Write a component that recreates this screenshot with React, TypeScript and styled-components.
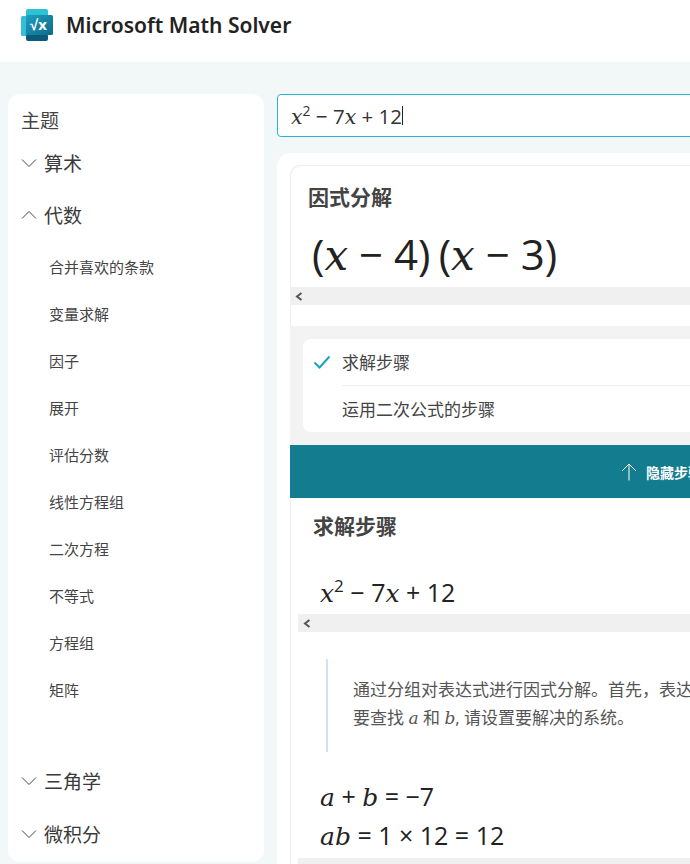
import React from "react";
import styled, { createGlobalStyle } from "styled-components";

const CJK = `"Open Sans", "Noto Sans CJK SC", sans-serif`;

const GlobalStyle = createGlobalStyle`
  html, body {
    margin: 0;
    height: 864px;
    overflow: hidden;
    background: #f2f7f7;
    font-family: ${CJK};
    color: #333;
  }
  * {
    box-sizing: border-box;
  }
`;

const Header = styled.header`
  height: 62px;
  background: #fff;
  display: flex;
  align-items: center;
  padding: 0 0 12px 21px;
  gap: 13px;
`;

const Brand = styled.div`
  font-size: 21px;
  font-weight: 600;
  color: #222;
  white-space: nowrap;
  font-family: "Noto Sans", sans-serif;
`;

const Page = styled.div`
  display: flex;
  align-items: flex-start;
  gap: 13px;
  padding: 32px 0 0 8px;
  width: 1200px;
`;

const Sidebar = styled.aside`
  width: 256px;
  flex: none;
  height: 768px;
  background: #fff;
  border-radius: 12px;
  padding-top: 15px;
`;

const SideTitle = styled.div`
  height: 24px;
  line-height: 24px;
  margin: 0 0 3.5px 13px;
  font-size: 19px;
  color: #444;
`;

const TopicRow = styled.div`
  height: 52.6px;
  display: flex;
  align-items: center;
  gap: 7px;
  padding-left: 13px;
  font-size: 19px;
  color: #3a3a3a;
`;

const TopicList = styled.ul`
  list-style: none;
  margin: 2px 0 41px;
  padding: 0;
`;

const TopicItem = styled.li`
  height: 47px;
  line-height: 47px;
  padding-left: 41px;
  font-size: 15px;
  color: #444;
`;

const Main = styled.main`
  width: 900px;
  flex: none;
  display: flex;
  flex-direction: column;
  gap: 16px;
`;

const SearchBox = styled.div`
  height: 43px;
  background: #fff;
  border: 1px solid #2bb4d0;
  border-radius: 4px;
  display: flex;
  align-items: center;
  padding-left: 13px;
  font-size: 20.5px;
  color: #333;
`;

const Caret = styled.span`
  display: inline-block;
  width: 1px;
  height: 19px;
  background: #222;
`;

const Panel = styled.section`
  background: #fff;
  border-radius: 14px 0 0 0;
  padding: 12px 0 0 13px;
  height: 720px;
`;

const Card = styled.div`
  width: 743px;
  height: 700px;
  background: #fff;
  box-shadow: inset 1px 1px 0 #eee;
  border-radius: 10px 0 0 0;
  overflow: hidden;
`;

const CardTitle = styled.h2<{ $h: number }>`
  margin: 0;
  font-size: 21px;
  font-weight: 700;
  color: #444;
  height: ${(p) => p.$h}px;
  display: flex;
  align-items: center;
`;

const TitleArea = styled.div`
  padding: 15px 0 9px 18px;
`;

const MathLine = styled.div<{ $size: number; $h: number; $left: number; $top?: number }>`
  font-size: ${(p) => p.$size}px;
  height: ${(p) => p.$h}px;
  line-height: ${(p) => p.$h}px;
  padding-left: ${(p) => p.$left}px;
  margin-top: ${(p) => p.$top ?? 0}px;
  color: #222;
  white-space: nowrap;
`;

const V = styled.i`
  font-family: "DejaVu Serif", serif;
  font-style: italic;
  font-size: 1em;
  line-height: 0;
`;

const Sup = styled.sup`
  font-size: 0.68em;
  line-height: 0;
  vertical-align: 0.6em;
`;

const Gap = styled.span<{ $w: number }>`
  display: inline-block;
  width: ${(p) => p.$w}em;
`;

const ScrollStrip = styled.div`
  height: 18px;
  background: #f0f0f0;
  display: flex;
  align-items: center;
  padding-left: 5px;
  color: #555;
`;

const OptionsArea = styled.div`
  margin-top: 21px;
  background: #f3f3f3;
  height: 119px;
  padding: 13px 0 0 13px;
`;

const Options = styled.div`
  width: 600px;
  height: 93px;
  background: #fff;
  border-radius: 8px;
  padding-left: 39px;
`;

const OptionRow = styled.div<{ $divider?: boolean }>`
  height: 46.5px;
  display: flex;
  align-items: center;
  font-size: 17px;
  color: #444;
  border-bottom: ${(p) => (p.$divider ? "1px solid #efefef" : "none")};
  position: relative;
`;

const CheckMark = styled.svg`
  position: absolute;
  left: -29px;
  top: 16px;
`;

const ToggleBand = styled.div`
  height: 53px;
  background: #137d8f;
  color: #fff;
  display: flex;
  align-items: center;
  justify-content: center;
  gap: 9px;
  font-size: 14px;
  font-weight: 700;
`;

const Steps = styled.div`
  padding: 0 0 0 8px;
`;

const StepsTitle = styled(CardTitle)`
  padding-left: 15px;
  margin-top: 10px;
`;

const Note = styled.blockquote`
  margin: 27px 0 0 28px;
  height: 93px;
  border-left: 2px solid #cfe4ee;
  padding: 17px 0 0 25px;
  font-size: 17px;
  line-height: 28px;
  color: #555;
  white-space: nowrap;
`;

const Equations = styled.div`
  margin-top: 25px;
  padding-bottom: 3px;
`;

const Chevron = ({ up }: { up?: boolean }) => (
  <svg width="16" height="10" viewBox="0 0 16 10" fill="none" stroke="#444" strokeWidth="1">
    <path d={up ? "M1 8.5 L8 1.5 L15 8.5" : "M1 1.5 L8 8.5 L15 1.5"} />
  </svg>
);

const ScrollLeft = () => (
  <svg width="8" height="9" viewBox="0 0 8 9" fill="none" stroke="#555" strokeWidth="2">
    <path d="M6.5 1 L2 4.5 L6.5 8" />
  </svg>
);

const Logo = () => (
  <svg width="32" height="32" viewBox="0 0 32 32">
    <defs>
      <linearGradient id="logoBody" x1="0" y1="0" x2="1" y2="1">
        <stop offset="0" stopColor="#1f9fc0" />
        <stop offset="1" stopColor="#0d6a8a" />
      </linearGradient>
    </defs>
    <path d="M5 2 Q5 0 7 0 H25 Q27 0 27 2 V7 H5 Z" fill="#2cc4d4" />
    <rect x="0" y="7" width="6" height="20" rx="1.5" fill="#35bfd6" />
    <rect x="5" y="25" width="22" height="7" rx="2" fill="#0b5a7c" />
    <rect x="5" y="6" width="27" height="20" rx="1.5" fill="url(#logoBody)" />
    <text x="17.5" y="21" textAnchor="middle" fontSize="15" fontWeight="700" fontFamily="Noto Sans, sans-serif" fill="#fff">
      √x
    </text>
  </svg>
);

const topics = ["合并喜欢的条款", "变量求解", "因子", "展开", "评估分数", "线性方程组", "二次方程", "不等式", "方程组", "矩阵"];

export default function App() {
  return (
    <>
      <GlobalStyle />
      <Header>
        <Logo />
        <Brand>Microsoft Math Solver</Brand>
      </Header>
      <Page>
        <Sidebar>
          <SideTitle>主题</SideTitle>
          <TopicRow>
            <Chevron />
            算术
          </TopicRow>
          <TopicRow>
            <Chevron up />
            代数
          </TopicRow>
          <TopicList>
            {topics.map((t) => (
              <TopicItem key={t}>{t}</TopicItem>
            ))}
          </TopicList>
          <TopicRow>
            <Chevron />
            三角学
          </TopicRow>
          <TopicRow>
            <Chevron />
            微积分
          </TopicRow>
        </Sidebar>
        <Main>
          <SearchBox>
            <span>
              <V>x</V>
              <Sup>2</Sup> − 7<V>x</V> + 12
            </span>
            <Caret />
          </SearchBox>
          <Panel>
            <Card>
              <TitleArea>
                <CardTitle $h={32}>因式分解</CardTitle>
              </TitleArea>
              <MathLine $size={42} $h={66} $left={22}>
                (<V>x</V> − 4)
                <Gap $w={0.2} />(<V>x</V> − 3)
              </MathLine>
              <ScrollStrip>
                <ScrollLeft />
              </ScrollStrip>
              <OptionsArea>
                <Options>
                  <OptionRow $divider>
                    <CheckMark width="18" height="14" viewBox="0 0 18 14" fill="none" stroke="#1ba3b8" strokeWidth="2">
                      <path d="M1.5 7.5 L6.5 12.5 L16.5 1.5" />
                    </CheckMark>
                    求解步骤
                  </OptionRow>
                  <OptionRow>运用二次公式的步骤</OptionRow>
                </Options>
              </OptionsArea>
              <ToggleBand>
                <svg width="16" height="18" viewBox="0 0 16 18" fill="none" stroke="#fff" strokeWidth="1">
                  <path d="M8 17.5 V1 M1 8 L8 1 L15 8" />
                </svg>
                隐藏步骤
              </ToggleBand>
              <Steps>
                <StepsTitle $h={34}>求解步骤</StepsTitle>
                <MathLine $size={25} $h={43} $left={22} $top={29}>
                  <V>x</V>
                  <Sup>2</Sup> − 7<V>x</V> + 12
                </MathLine>
                <ScrollStrip>
                  <ScrollLeft />
                </ScrollStrip>
                <Note>
                  通过分组对表达式进行因式分解。首先，表达式需要重写为
                  <br />
                  要查找 <V>a</V> 和 <V>b</V>, 请设置要解决的系统。
                </Note>
                <Equations>
                  <MathLine $size={25} $h={39} $left={22}>
                    <V>a</V> + <V>b</V> = −7
                  </MathLine>
                  <MathLine $size={25} $h={39} $left={22}>
                    <V>ab</V> = 1 × 12 = 12
                  </MathLine>
                </Equations>
                <ScrollStrip />
              </Steps>
            </Card>
          </Panel>
        </Main>
      </Page>
    </>
  );
}
